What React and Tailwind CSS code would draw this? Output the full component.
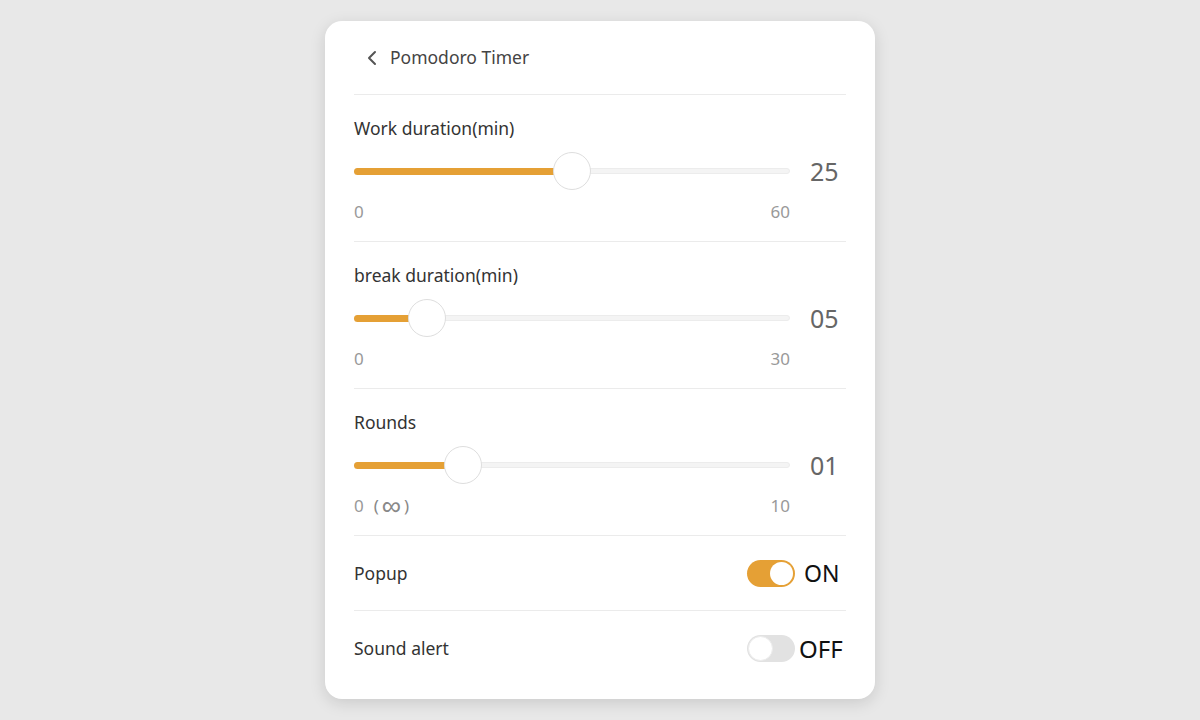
import React from 'react';

const sliders = [
  { label: 'Work duration(min)', value: '25', min: '0', max: '60', pos: 50 },
  { label: 'break duration(min)', value: '05', min: '0', max: '30', pos: 16.7 },
  { label: 'Rounds', value: '01', min: '0', max: '10', pos: 25, infinite: true },
];

const toggles = [
  { label: 'Popup', on: true },
  { label: 'Sound alert', on: false },
];

const Slider = ({ item }) => (
  <div className="pt-[22px] pb-[19px] border-b border-[#ebebeb]">
    <div className="text-[17.5px] leading-[22px] text-[#333]">{item.label}</div>
    <div className="mt-[13px] h-[38px] flex items-center">
      <div className="relative w-[436px] h-[38px] flex items-center">
        <div className="w-full h-[6px] rounded-full bg-[#f4f4f4] border border-[#ececec]" />
        <div
          className="absolute left-0 h-[7px] rounded-full bg-[#e5a035]"
          style={{ width: `${item.pos}%` }}
        />
        <div
          className="absolute top-0 w-[38px] h-[38px] -ml-[19px] rounded-full bg-white border border-[#dedede]"
          style={{ left: `${item.pos}%` }}
        />
      </div>
      <div className="ml-[20px] text-[25px] leading-none text-[#666]">{item.value}</div>
    </div>
    <div className="mt-[12px] w-[436px] h-[20px] flex justify-between items-center text-[17px] text-[#999]">
      <div className="h-[20px] flex items-center">
        <span>{item.min}</span>
        {item.infinite && (
          <div className="h-[20px] ml-[10px] flex items-center text-[#888]">
            <span>(</span>
            <span className="text-[27px] leading-none mx-[3px] -mt-[3px]">∞</span>
            <span>)</span>
          </div>
        )}
      </div>
      <span>{item.max}</span>
    </div>
  </div>
);

const Toggle = ({ item, last }) => (
  <div
    className={
      last
        ? 'h-[75px] flex items-center justify-between'
        : 'h-[75px] flex items-center justify-between border-b border-[#ebebeb]'
    }
  >
    <span className="text-[17.5px] text-[#333]">{item.label}</span>
    <div className="w-[99px] flex items-center">
      {item.on ? (
        <div className="w-[48px] h-[27px] rounded-full bg-[#e5a035] flex items-center justify-end p-[2px]">
          <div className="w-[23px] h-[23px] rounded-full bg-white" />
        </div>
      ) : (
        <div className="w-[48px] h-[27px] rounded-full bg-[#e2e2e2] flex items-center justify-start p-[1px]">
          <div className="w-[25px] h-[25px] rounded-full bg-white border border-[#ececec]" />
        </div>
      )}
      <span className={item.on ? 'ml-[9px] text-[23px] text-[#111]' : 'ml-[4px] text-[24px] text-[#111]'}>
        {item.on ? 'ON' : 'OFF'}
      </span>
    </div>
  </div>
);

export default function App() {
  return (
    <div className="min-h-screen bg-[#e8e8e8] pt-[21px] font-['Noto_Sans',sans-serif]">
      <div className="mx-auto w-[550px] h-[678px] bg-white rounded-[17px] shadow-[0_4px_16px_rgba(0,0,0,0.13)] px-[29px]">
        {/* header */}
        <div className="h-[74px] flex items-center gap-[11px] pl-[11px] border-b border-[#ebebeb]">
          <svg width="14" height="16" viewBox="0 0 14 16" fill="none" stroke="#555" strokeWidth="2" strokeLinecap="round" strokeLinejoin="round">
            <path d="M10 2 L4 8 L10 14" />
          </svg>
          <span className="text-[17.5px] text-[#444]">Pomodoro Timer</span>
        </div>

        {sliders.map((s) => (
          <Slider key={s.label} item={s} />
        ))}

        {toggles.map((t, i) => (
          <Toggle key={t.label} item={t} last={i === toggles.length - 1} />
        ))}
      </div>
    </div>
  );
}
